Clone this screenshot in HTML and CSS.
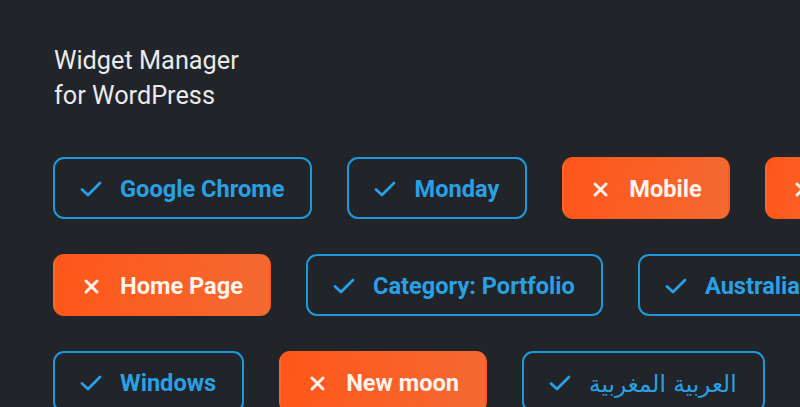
FILE: index.html
```html
<!DOCTYPE html>
<html lang="en">
<head>
    <meta charset="UTF-8">
    <meta name="viewport" content="width=device-width, initial-scale=1.0">
    <title>Widget Manager for WordPress</title>
    <link rel="stylesheet" href="styles.css">
</head>
<body>
    <div class="page">
        <h1 class="title">Widget Manager<br>for WordPress</h1>

        <div class="chip-row">
            <div class="chip on"><span class="icon check"></span>Google Chrome</div>
            <div class="chip on"><span class="icon check"></span>Monday</div>
            <div class="chip off"><span class="icon cross"></span>Mobile</div>
            <div class="chip off"><span class="icon cross"></span></div>
        </div>

        <div class="chip-row">
            <div class="chip off"><span class="icon cross"></span>Home Page</div>
            <div class="chip on"><span class="icon check"></span>Category: Portfolio</div>
            <div class="chip on"><span class="icon check"></span>Australia</div>
        </div>

        <div class="chip-row">
            <div class="chip on"><span class="icon check"></span>Windows</div>
            <div class="chip off"><span class="icon cross"></span>New moon</div>
            <div class="chip on"><span class="icon check"></span><span class="arabic" dir="rtl">العربية المغربية</span></div>
            <div class="chip on"><span class="icon check"></span></div>
        </div>
    </div>

    <script>
        // fill the icon placeholders
        document.querySelectorAll('.icon.check').forEach(function(el) {
            el.innerHTML = '<svg width="22" height="16" viewBox="0 0 22 16"><path d="M2 8.5 L8 14 L20 2" fill="none" stroke="currentColor" stroke-width="2.8" stroke-linecap="round" stroke-linejoin="round"/></svg>';
        });
        document.querySelectorAll('.icon.cross').forEach(function(el) {
            el.innerHTML = '<svg width="15" height="15" viewBox="0 0 15 15"><path d="M2 2 L13 13 M13 2 L2 13" stroke="currentColor" stroke-width="2.9" stroke-linecap="round"/></svg>';
        });
    </script>
</body>
</html>
```

FILE: styles.css
```css
body {
    margin: 0;
    background-color: #212428;
    font-family: Roboto, "Liberation Sans", sans-serif;
    overflow: hidden;
}

.page {
    padding: 43px 0 0 53px;
}

.title {
    margin: 0 0 44px 1px;
    font-size: 25.3px;
    font-weight: 400;
    line-height: 35px;
    color: #e9eaec;
}

.chip-row {
    display: flex;
    gap: 35px;
    margin-bottom: 35px;
    white-space: nowrap;
}

.chip {
    flex: none;
    display: flex;
    align-items: center;
    height: 62px;
    box-sizing: border-box;
    padding: 2px 26px 0 25px;
    border-radius: 11px;
    font-size: 23.6px;
    font-weight: 700;
}

.chip.on {
    border: 2px solid #1f98db;
    color: #2aa0e4;
}

.chip.off {
    border: 2px solid transparent;
    background: linear-gradient(100deg, #ff561a 0%, #f36a31 100%);
    color: #fff4ee;
}

.icon {
    display: flex;
    align-items: center;
    justify-content: center;
    width: 22px;
    margin-right: 18px;
}

.icon svg {
    display: block;
}

.arabic {
    font-family: "DejaVu Sans", sans-serif;
    font-weight: 400;
    font-size: 23.2px;
}
```
